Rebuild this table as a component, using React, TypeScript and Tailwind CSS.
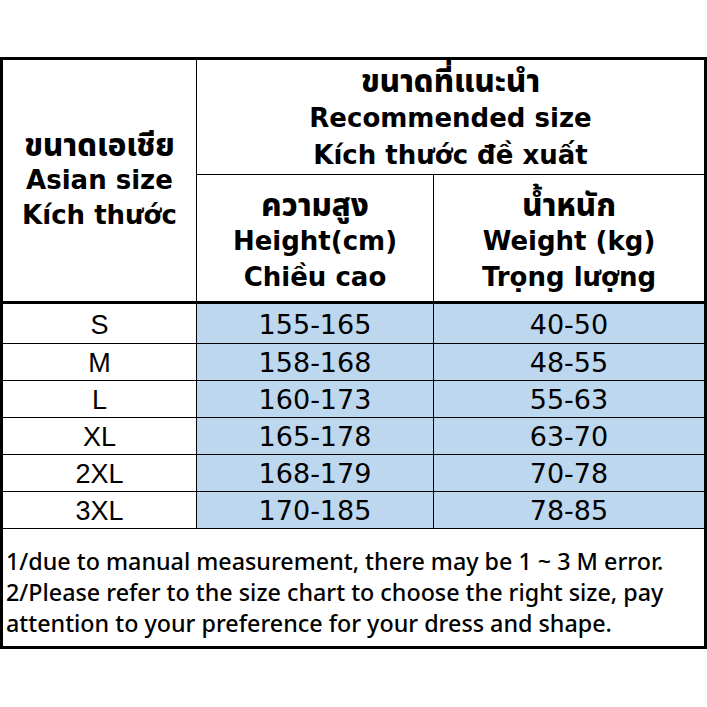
import React from "react";

const head = "font-['DejaVu_Sans','Noto_Sans_Thai','Noto_Sans',sans-serif] font-bold text-[26px] text-black";
const thai = "text-[31px] font-extrabold";
const num = "font-['DejaVu_Sans',sans-serif] text-[27px] text-black";

const rows = [
  ["S", "155-165", "40-50"],
  ["M", "158-168", "48-55"],
  ["L", "160-173", "55-63"],
  ["XL", "165-178", "63-70"],
  ["2XL", "168-179", "70-78"],
  ["3XL", "170-185", "78-85"],
];

export default function App() {
  return (
    <div className="w-[707px] h-[707px] bg-white pt-[57px]">
      <div className="w-[707px] border-[3px] border-black">
        {/* header */}
        <div className="flex h-[244px] border-b-[3px] border-black">
          <div className={`w-[194px] border-r border-black flex flex-col justify-center items-center leading-[35px] ${head}`}>
            <div className={thai}>ขนาดเอเชีย</div>
            <div>Asian size</div>
            <div>Kích thước</div>
          </div>
          <div className="flex-1 flex flex-col">
            <div className={`h-[115px] border-b border-black flex flex-col justify-center items-center leading-[37px] pt-[2px] ${head}`}>
              <div className={thai}>ขนาดที่แนะนำ</div>
              <div>Recommended size</div>
              <div>Kích thước đề xuất</div>
            </div>
            <div className="flex-1 flex">
              <div className={`w-[237px] border-r border-black flex flex-col justify-center items-center leading-[36px] pt-[6px] ${head}`}>
                <div className={thai}>ความสูง</div>
                <div>Height(cm)</div>
                <div>Chiều cao</div>
              </div>
              <div className={`flex-1 flex flex-col justify-center items-center leading-[36px] pt-[6px] ${head}`}>
                <div className={thai}>น้ำหนัก</div>
                <div>Weight (kg)</div>
                <div>Trọng lượng</div>
              </div>
            </div>
          </div>
        </div>
        {/* data rows */}
        {rows.map((r, i) => (
          <div
            key={r[0]}
            className={`flex border-b border-black ${i === 0 ? "h-[40px]" : "h-[37px]"}`}
          >
            <div className="w-[194px] border-r border-black flex items-center justify-center pt-[3px] font-['Liberation_Sans',sans-serif] text-[27px] text-black">
              {r[0]}
            </div>
            <div className={`w-[237px] border-r border-black bg-[#bdd7ee] flex items-center justify-center pt-[3px] ${num}`}>
              {r[1]}
            </div>
            <div className={`flex-1 bg-[#bdd7ee] flex items-center justify-center pt-[3px] ${num}`}>
              {r[2]}
            </div>
          </div>
        ))}
        {/* notes */}
        <div className="h-[117px] flex flex-col justify-center pl-[3px] pt-[10px] font-['Noto_Sans',sans-serif] font-medium text-[23.3px] leading-[31px] text-black">
          <div>1/due to manual measurement, there may be 1 ~ 3 M error.</div>
          <div>2/Please refer to the size chart to choose the right size, pay</div>
          <div>attention to your preference for your dress and shape.</div>
        </div>
      </div>
    </div>
  );
}
